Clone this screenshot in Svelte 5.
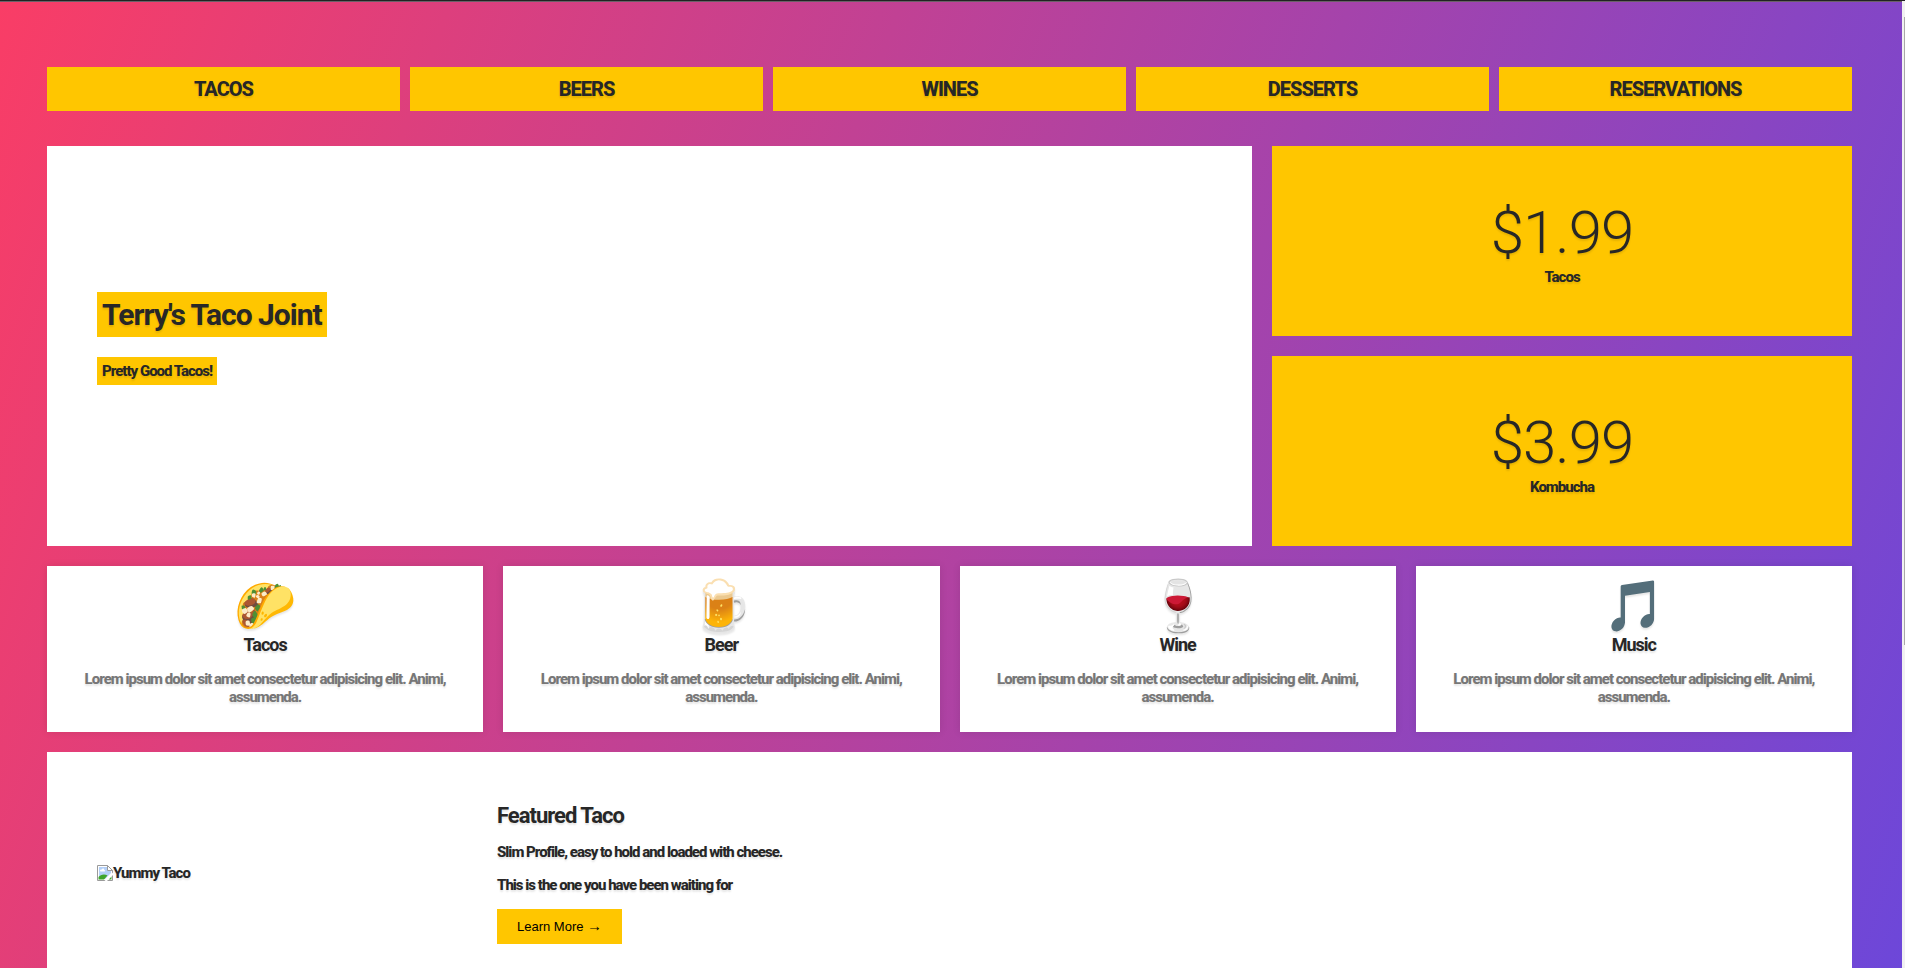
<script>
  const menu = ['Tacos', 'Beers', 'Wines', 'Desserts', 'Reservations'];
  const prices = [
    { price: '$1.99', label: 'Tacos' },
    { price: '$3.99', label: 'Kombucha' }
  ];
  const features = [
    { icon: '🌮', title: 'Tacos' },
    { icon: '🍺', title: 'Beer' },
    { icon: '🍷', title: 'Wine' },
    { icon: '🎵', title: 'Music' }
  ];
</script>

<div class="window">
  <div class="page">
    <div class="wrapper">
      <nav>
        <ul>
          {#each menu as item}
            <li><a href="#{item.toLowerCase()}">{item}</a></li>
          {/each}
        </ul>
      </nav>

      <main>
        <section class="top">
          <div class="hero">
            <h1>Terry's Taco Joint</h1>
            <p>Pretty Good Tacos!</p>
          </div>
          {#each prices as item}
            <div class="cta">
              <p class="price">{item.price}</p>
              <p>{item.label}</p>
            </div>
          {/each}
        </section>

        <section class="features">
          {#each features as feature}
            <article class="feature">
              <span class="icon">{feature.icon}</span>
              <h3>{feature.title}</h3>
              <p>Lorem ipsum dolor sit amet consectetur adipisicing elit. Animi, assumenda.</p>
            </article>
          {/each}
        </section>

        <section class="about">
          <div class="photo">
            <svg width="16" height="16" viewBox="0 0 16 16" aria-hidden="true">
              <path d="M.5.5h10l5 5v10H.5z" fill="#fff" stroke="#9a9a9a" />
              <path d="M2 2h8.500v3.500H14V8l-6 6H2z" fill="#b4d0f8" />
              <path d="M3 6c0-1.300 1-1.600 1.700-1.400C5.200 3 7.300 3.400 7.300 5c1.200 0 1.200 1.600 0 1.600H3.500z" fill="#fff" />
              <path d="M1.500 14.500V12c2-2.500 6-3.500 9-1.500l-3.500 4z" fill="#3fa52c" />
              <path d="M11.500 14.500 14.500 11v3.500z" fill="#3fa52c" />
              <path d="M7.500 16 16 7.500V10l-6 6z" fill="#fff" />
              <path d="M10.500.5v5h5z" fill="#fff" stroke="#9a9a9a" />
            </svg>
            <span>Yummy Taco</span>
          </div>
          <div class="details">
            <h2>Featured Taco</h2>
            <p>Slim Profile, easy to hold and loaded with cheese.</p>
            <p>This is the one you have been waiting for</p>
            <button type="button">Learn More <span class="arrow">→</span></button>
          </div>
        </section>
      </main>
    </div>
  </div>
  <div class="scrollbar" aria-hidden="true"><div class="thumb"></div></div>
</div>

<style>
  :global(*) {
    box-sizing: border-box;
  }
  :global(body) {
    margin: 0;
    color: #272727;
    font: 800 15px/18px Roboto, 'Noto Color Emoji', sans-serif;
    letter-spacing: -1px;
    text-shadow: 0 2px 2px rgba(0, 0, 0, 0.1);
  }
  h1,
  h2,
  h3,
  p {
    margin: 0;
  }
  h1,
  h2,
  h3 {
    font-weight: 700;
  }
  .window {
    display: flex;
    height: 100vh;
    overflow: hidden;
    border-top: 1px solid #222;
  }
  .page {
    flex: 1;
    min-width: 0;
    overflow: hidden;
    border-top: 1px solid #6b6068;
    background: linear-gradient(110deg, #f93d66, #6d47d9) padding-box;
  }
  .wrapper {
    padding: 65px 50px 50px 47px;
  }
  ul {
    display: grid;
    grid-template-columns: repeat(5, 1fr);
    gap: 10px;
    margin: 0 0 35px;
    padding: 0;
    list-style: none;
  }
  a {
    display: block;
    padding: 10px;
    background: #ffc600;
    color: inherit;
    font-size: 20px;
    line-height: 24px;
    text-align: center;
    text-decoration: none;
    text-transform: uppercase;
  }
  main {
    display: grid;
    gap: 20px;
  }
  .top {
    display: grid;
    grid-template-columns: 1205fr 580fr;
    grid-template-rows: repeat(2, 190px);
    gap: 20px;
  }
  .hero {
    grid-row: span 2;
    display: flex;
    flex-direction: column;
    align-items: flex-start;
    justify-content: center;
    gap: 20px;
    padding: 35px 50px 50px;
    background: #fff;
  }
  .hero > * {
    padding: 5px;
    background: #ffc600;
  }
  h1 {
    font-size: 30px;
    line-height: 35px;
  }
  .cta {
    display: flex;
    flex-direction: column;
    align-items: center;
    justify-content: center;
    padding-top: 2px;
    background: #ffc600;
  }
  .price {
    font-size: 60px;
    font-weight: 300;
    line-height: 70px;
  }
  .features {
    display: grid;
    grid-template-columns: repeat(4, 1fr);
    gap: 20px;
  }
  .feature {
    padding: 10px 30px 26px;
    background: #fff;
    box-shadow: 0 0 8px rgba(0, 0, 0, 0.1);
    text-align: center;
  }
  .icon {
    display: block;
    font-size: 50px;
    font-weight: 400;
    line-height: 60px;
  }
  h3 {
    margin-bottom: 16px;
    font-size: 18px;
    line-height: 18px;
  }
  .feature p {
    color: #777;
  }
  .about {
    display: grid;
    grid-template-columns: 380px 1fr;
    align-items: center;
    gap: 20px;
    padding: 50px;
    background: #fff;
  }
  .photo {
    display: flex;
    align-items: center;
  }
  h2 {
    margin-bottom: 14px;
    font-size: 22px;
    line-height: 27px;
  }
  .details p {
    margin-bottom: 15px;
  }
  button {
    padding: 10px 20px;
    border: 0;
    background: #ffc600;
    color: #000;
    font: 13px/15px 'Liberation Sans', Arial, sans-serif;
    letter-spacing: normal;
    text-shadow: none;
  }
  .arrow {
    font-family: 'Liberation Serif', serif;
    font-size: 15px;
  }
  .scrollbar {
    width: 3px;
    padding: 16px 0 0 2px;
    background: #f1f1f1;
  }
  .thumb {
    height: 66%;
    background: #a8a8a8;
  }
</style>
